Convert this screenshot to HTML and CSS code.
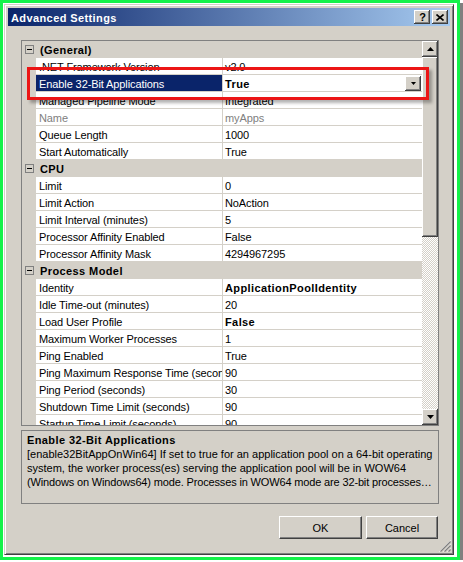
FILE: index.html
```html
<!DOCTYPE html>
<html>
<head>
<meta charset="utf-8">
<title>Advanced Settings</title>
<link rel="stylesheet" href="styles.css">
</head>
<body>
<div class="frame">
  <div class="window">
    <div class="titlebar">
      <span class="title">Advanced Settings</span>
      <div class="tbtns">
        <span class="tbtn help">?</span>
        <span class="tbtn"><svg width="8" height="7" viewBox="0 0 8 7"><path d="M0.5 0.5 L7.5 6.5 M7.5 0.5 L0.5 6.5" stroke="#000" stroke-width="1.6" fill="none"/></svg></span>
      </div>
    </div>
    <div class="body">
      <div class="grid">
        <div class="rows">
          <div class="cat"><span class="toggle"></span><span>(General)</span></div>
          <div class="row"><span class="gutter"></span><span class="name">.NET Framework Version</span><span class="val">v2.0</span></div>
          <div class="row"><span class="gutter"></span><span class="name sel">Enable 32-Bit Applications</span><span class="val bold">True<span class="dd"><svg width="5" height="3" viewBox="0 0 5 3"><polygon points="0,0 5,0 2.5,3" fill="#000"/></svg></span></span></div>
          <div class="row"><span class="gutter"></span><span class="name">Managed Pipeline Mode</span><span class="val">Integrated</span></div>
          <div class="row"><span class="gutter"></span><span class="name ro">Name</span><span class="val ro">myApps</span></div>
          <div class="row"><span class="gutter"></span><span class="name">Queue Length</span><span class="val">1000</span></div>
          <div class="row"><span class="gutter"></span><span class="name">Start Automatically</span><span class="val">True</span></div>
          <div class="cat"><span class="toggle"></span><span>CPU</span></div>
          <div class="row"><span class="gutter"></span><span class="name">Limit</span><span class="val">0</span></div>
          <div class="row"><span class="gutter"></span><span class="name">Limit Action</span><span class="val">NoAction</span></div>
          <div class="row"><span class="gutter"></span><span class="name">Limit Interval (minutes)</span><span class="val">5</span></div>
          <div class="row"><span class="gutter"></span><span class="name">Processor Affinity Enabled</span><span class="val">False</span></div>
          <div class="row"><span class="gutter"></span><span class="name">Processor Affinity Mask</span><span class="val">4294967295</span></div>
          <div class="cat"><span class="toggle"></span><span>Process Model</span></div>
          <div class="row"><span class="gutter"></span><span class="name">Identity</span><span class="val bold">ApplicationPoolIdentity</span></div>
          <div class="row"><span class="gutter"></span><span class="name">Idle Time-out (minutes)</span><span class="val">20</span></div>
          <div class="row"><span class="gutter"></span><span class="name">Load User Profile</span><span class="val bold">False</span></div>
          <div class="row"><span class="gutter"></span><span class="name">Maximum Worker Processes</span><span class="val">1</span></div>
          <div class="row"><span class="gutter"></span><span class="name">Ping Enabled</span><span class="val">True</span></div>
          <div class="row"><span class="gutter"></span><span class="name">Ping Maximum Response Time (seconds)</span><span class="val">90</span></div>
          <div class="row"><span class="gutter"></span><span class="name">Ping Period (seconds)</span><span class="val">30</span></div>
          <div class="row"><span class="gutter"></span><span class="name">Shutdown Time Limit (seconds)</span><span class="val">90</span></div>
          <div class="row"><span class="gutter"></span><span class="name">Startup Time Limit (seconds)</span><span class="val">90</span></div>
        </div>
        <div class="vscroll">
          <span class="sbtn"><svg width="7" height="4" viewBox="0 0 7 4"><polygon points="3.5,0 7,4 0,4" fill="#000"/></svg></span>
          <span class="thumb"></span>
          <span class="track"></span>
          <span class="sbtn"><svg width="7" height="4" viewBox="0 0 7 4"><polygon points="0,0 7,0 3.5,4" fill="#000"/></svg></span>
        </div>
      </div>
      <div class="desc">
        <div class="dtitle">Enable 32-Bit Applications</div>
        <div class="dline">[enable32BitAppOnWin64] If set to true for an application pool on a 64-bit operating</div>
        <div class="dline">system, the worker process(es) serving the application pool will be in WOW64</div>
        <div class="dline tight">(Windows on Windows64) mode. Processes in WOW64 mode are 32-bit processes…</div>
      </div>
      <div class="buttons">
        <span class="btn ok">OK</span>
        <span class="btn cancel">Cancel</span>
      </div>
    </div>
    <svg class="grip" width="12" height="12" viewBox="0 0 12 12"><path d="M11.5 0.5 L0.5 11.5 M11.5 4.5 L4.5 11.5 M11.5 8.5 L8.5 11.5" stroke="#fff" fill="none"/><path d="M11.5 1.5 L1.5 11.5 M11.5 5.5 L5.5 11.5 M11.5 9.5 L9.5 11.5" stroke="#808080" stroke-width="1.4" fill="none"/></svg>
  </div>
  <div class="highlight"></div>
</div>
</body>
</html>
```

FILE: styles.css
```css
* { box-sizing: border-box; }
html, body { margin: 0; padding: 0; background: #fff; }
body {
  font-family: "Liberation Sans", Arial, sans-serif;
  font-size: 11px;
  color: #000;
}
.frame {
  position: relative;
  width: 460px;
  height: 560px;
  border: 3px solid #14f24a;
  background: #fff;
  padding: 1px 3px 2px 1px;
  box-shadow: 3px 3px 0 #808080;
}
.window {
  position: relative;
  height: 100%;
  background: #d4d0c8;
  border: 1px solid;
  border-color: #d4d0c8 #404040 #404040 #d4d0c8;
  box-shadow: inset 1px 1px #fff, inset -1px -1px #808080;
  padding: 3px;
  display: flex;
  flex-direction: column;
}
.titlebar {
  height: 18px;
  flex: none;
  display: flex;
  align-items: center;
  padding: 1px 2px 0 3px;
  background: linear-gradient(to right, #0a246a, #a6caf0);
}
.title {
  color: #fff;
  font-weight: bold;
  letter-spacing: 0.4px;
}
.tbtns {
  margin-left: auto;
  margin-top: -1px;
  display: flex;
  gap: 2px;
}
.tbtn, .sbtn, .thumb, .dd {
  background: #d4d0c8;
  box-shadow: inset -1px -1px #404040, inset 1px 1px #fff, inset -2px -2px #808080;
  display: flex;
  align-items: center;
  justify-content: center;
}
.tbtn {
  width: 16px;
  height: 14px;
  font-weight: bold;
  font-size: 11px;
  line-height: 14px;
}
.tbtn.help { padding-left: 1px; padding-bottom: 1px; }
.body {
  flex: 1;
  display: flex;
  flex-direction: column;
  padding: 14px 11px 0 13px;
}
.grid {
  height: 386px;
  flex: none;
  border: 1px solid #808080;
  background: #fff;
  display: flex;
  overflow: hidden;
}
.rows {
  flex: 1;
  overflow: hidden;
}
.row, .cat {
  height: 17px;
  display: flex;
  border-bottom: 1px solid #d4d0c8;
  line-height: 16px;
  white-space: nowrap;
}
.cat {
  background: #d4d0c8;
  align-items: center;
  padding-left: 3px;
  font-weight: bold;
  letter-spacing: 0.4px;
}
.cat span:last-child { padding-top: 2px; }
.toggle {
  width: 9px;
  height: 9px;
  border: 1px solid #808080;
  margin-right: 6px;
  position: relative;
  flex: none;
}
.toggle::after {
  content: "";
  position: absolute;
  left: 1px;
  top: 3px;
  width: 5px;
  height: 1px;
  background: #000;
}
.gutter {
  width: 14px;
  flex: none;
  background: #d4d0c8;
}
.name {
  width: 187px;
  flex: none;
  border-right: 1px solid #d4d0c8;
  padding: 1px 0 0 3px;
  overflow: hidden;
  letter-spacing: -0.1px;
}
.name.sel {
  background: #0a246a;
  color: #fff;
}
.val {
  flex: 1;
  padding: 1px 0 0 2px;
  display: flex;
  overflow: hidden;
  letter-spacing: -0.1px;
}
.val.bold {
  font-weight: bold;
  letter-spacing: 0.4px;
}
.ro { color: #808080; }
.dd {
  width: 16px;
  height: 15px;
  margin-left: auto;
  margin-right: 1px;
}
.vscroll {
  width: 16px;
  flex: none;
  display: flex;
  flex-direction: column;
}
.sbtn {
  height: 16px;
  flex: none;
}
.thumb {
  height: 180px;
  flex: none;
}
.track {
  flex: 1;
  background-image: conic-gradient(#fff 25%, #d4d0c8 0 50%, #fff 0 75%, #d4d0c8 0);
  background-size: 2px 2px;
}
.desc {
  height: 74px;
  flex: none;
  margin-top: 4px;
  border: 1px solid #808080;
  padding: 2px 5px;
  line-height: 14px;
  white-space: nowrap;
}
.dtitle {
  font-weight: bold;
  letter-spacing: 0.4px;
}
.dline.tight { letter-spacing: -0.15px; }
.buttons {
  margin-top: 12px;
  display: flex;
  justify-content: flex-end;
  gap: 4px;
  padding-right: 1px;
}
.btn {
  height: 23px;
  border: 1px solid;
  border-color: #fff #404040 #404040 #fff;
  box-shadow: inset -1px -1px #808080;
  display: flex;
  align-items: center;
  justify-content: center;
}
.btn.ok { width: 83px; }
.btn.cancel { width: 72px; }
.grip {
  position: absolute;
  right: 2px;
  bottom: 2px;
}
.highlight {
  position: absolute;
  left: 24px;
  top: 64px;
  width: 402px;
  height: 33px;
  border: 3px solid #ec1515;
  box-shadow: 3px 3px 3px rgba(0, 0, 0, 0.3);
}
```
